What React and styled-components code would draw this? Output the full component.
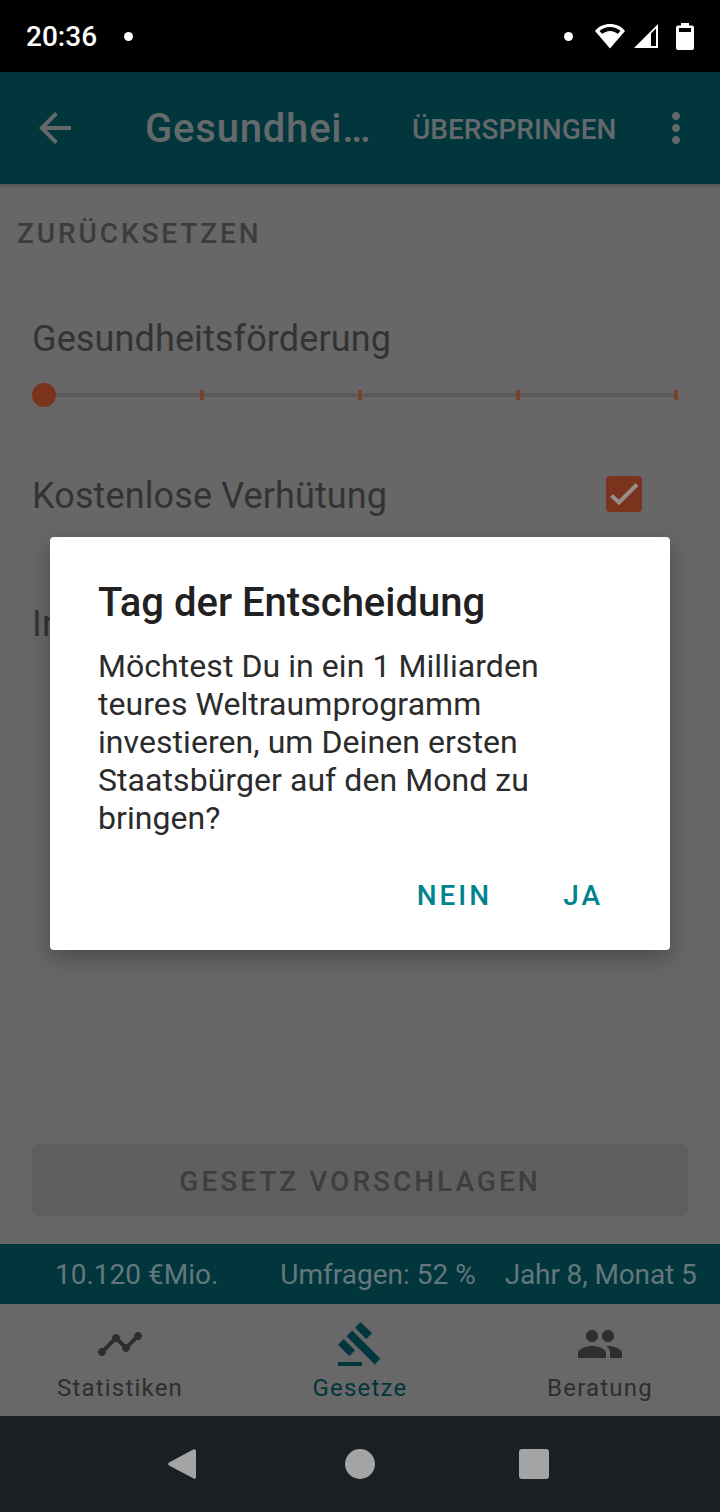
import styled, { createGlobalStyle } from "styled-components";

const GlobalStyle = createGlobalStyle`
  html, body { margin: 0; padding: 0; background: #676767; }
  * { box-sizing: border-box; }
`;

const Screen = styled.div`
  position: relative;
  width: 720px;
  height: 1512px;
  display: flex;
  flex-direction: column;
  overflow: hidden;
  background: #676767;
  font-family: Roboto, "Liberation Sans", sans-serif;
`;

const StatusBar = styled.div`
  height: 72px;
  background: #000;
  color: #fff;
  display: flex;
  align-items: center;
  padding: 0 26px;
`;

const Clock = styled.span`
  font-size: 28px;
  font-weight: 500;
`;

const StatusDot = styled.span`
  width: 9px;
  height: 9px;
  border-radius: 50%;
  background: #fff;
  margin-left: ${(p) => p.$left}px;
`;

const StatusIcons = styled.div`
  margin-left: auto;
  display: flex;
  align-items: center;
  svg:first-of-type {
    margin-left: 22px;
  }
  svg:nth-of-type(2) {
    margin-left: 8px;
  }
  svg:nth-of-type(3) {
    margin-left: 17px;
  }
`;

const Toolbar = styled.header`
  height: 112px;
  background: #02363d;
  color: #646a6c;
  display: flex;
  align-items: center;
  padding-left: 31px;
  box-shadow: 0 2px 3px rgba(0, 0, 0, 0.2);
  z-index: 1;
`;

const Title = styled.h1`
  margin: 0 0 0 66px;
  width: 267px;
  font-size: 40px;
  font-weight: 500;
  letter-spacing: 0.8px;
  white-space: nowrap;
`;

const Skip = styled.span`
  margin-top: 2px;
  font-size: 28px;
  font-weight: 500;
`;

const Kebab = styled.svg`
  margin-left: 36px;
`;

const Content = styled.main`
  flex: 1;
  display: flex;
  flex-direction: column;
  padding: 0 32px 28px;
`;

const Reset = styled.div`
  margin: 33px 0 0 -15px;
  font-size: 28px;
  font-weight: 500;
  line-height: 34px;
  letter-spacing: 2.9px;
  color: #3c3c3c;
`;

const Label = styled.div`
  font-size: 36px;
  line-height: 44px;
  letter-spacing: 0.12px;
  color: #333;
  white-space: nowrap;
`;

const LawTitle = styled(Label)`
  margin-top: 66px;
`;

const Slider = styled.div`
  position: relative;
  height: 24px;
  margin-top: 22px;
  padding-left: 14px;
  display: grid;
  grid-template-columns: repeat(4, 158px);
  align-items: center;
`;

const Track = styled.div`
  position: absolute;
  left: 12px;
  right: 10px;
  top: 10px;
  height: 4px;
  background: #5a5a5a;
`;

const Thumb = styled.div`
  position: absolute;
  left: 0;
  top: 0;
  width: 24px;
  height: 24px;
  border-radius: 50%;
  background: #7a341d;
`;

const Tick = styled.div`
  position: relative;
  justify-self: end;
  width: 4px;
  height: 10px;
  background: #76432f;
`;

const CheckRow = styled.div`
  margin-top: 67px;
  padding-right: 46px;
  display: flex;
  justify-content: space-between;
  align-items: flex-start;
`;

const CheckBox = styled.div`
  width: 36px;
  height: 36px;
  margin-top: 2px;
  border-radius: 4px;
  background: #7a341d;
`;

const HiddenRow = styled(Label)`
  margin-top: 84px;
`;

const ProposeButton = styled.div`
  margin-top: auto;
  height: 72px;
  padding-top: 2px;
  border-radius: 6px;
  background: #5f5f5f;
  color: #3e3e3e;
  font-size: 28px;
  font-weight: 500;
  letter-spacing: 3px;
  display: flex;
  align-items: center;
  justify-content: center;
`;

const StatsBar = styled.div`
  height: 60px;
  background: #02363d;
  color: #64787c;
  font-size: 28px;
  display: flex;
  align-items: center;
`;

const Stat = styled.span`
  margin-left: ${(p) => p.$left}px;
  letter-spacing: ${(p) => p.$spacing || 0}px;
  white-space: nowrap;
`;

const BottomNav = styled.nav`
  height: 112px;
  display: grid;
  grid-template-columns: repeat(3, 1fr);
  background: #686868;
`;

const NavItem = styled.div`
  display: flex;
  flex-direction: column;
  align-items: center;
  padding-top: 16px;
  color: ${(p) => (p.$active ? "#02363d" : "#2e2e2e")};
`;

const NavLabel = styled.span`
  font-size: 24px;
  line-height: 28px;
  letter-spacing: 1.2px;
  margin-top: 6px;
`;

const SystemBar = styled.div`
  height: 96px;
  background: #1c1f21;
  display: flex;
  align-items: center;
  padding-left: 168px;
`;

const HomeButton = styled.div`
  width: 30px;
  height: 30px;
  margin-left: 149px;
  border-radius: 50%;
  background: #a2a4a6;
`;

const RecentButton = styled.div`
  width: 30px;
  height: 30px;
  margin-left: 144px;
  border-radius: 3px;
  background: #a2a4a6;
`;

const Dialog = styled.section`
  position: absolute;
  left: 50px;
  top: 537px;
  width: 620px;
  height: 413px;
  padding: 41px 48px 0;
  border-radius: 4px;
  background: #fff;
  box-shadow: 0 8px 22px rgba(0, 0, 0, 0.28);
`;

const DialogTitle = styled.h2`
  margin: 0;
  font-size: 40px;
  line-height: 50px;
  font-weight: 500;
  color: #212121;
`;

const DialogText = styled.p`
  margin: 19px 0 0;
  font-size: 32px;
  line-height: 38px;
  letter-spacing: 0.06px;
  color: #2b2b2b;
`;

const DialogActions = styled.div`
  display: flex;
  justify-content: flex-end;
  gap: 71px;
  margin: 42px 19px 0 0;
`;

const DialogButton = styled.span`
  font-size: 28px;
  line-height: 34px;
  font-weight: 500;
  letter-spacing: 3px;
  color: #00838f;
`;

const Wifi = () => (
  <svg width="30" height="26" viewBox="0 0 30 26">
    <path d="M15 25.500 0 8C4 3 9 1 15 1s11 2 15 7z" fill="#fff" />
    <path d="M15 19 4.500 8C7.500 5.500 11 4 15 4s7.500 1.500 10.500 4z" fill="#000" />
    <path d="M15 24 6.500 11.500C9 9.500 12 8 15 8s6 1.500 8.500 3.500z" fill="#fff" />
  </svg>
);

const Signal = () => (
  <svg width="26" height="26" viewBox="0 0 26 26">
    <path d="M1 25 25 1v24z" fill="#fff" />
    <path d="M18 10.500 23 5.500V23h-5z" fill="#000" />
  </svg>
);

const Battery = () => (
  <svg width="18" height="27" viewBox="0 0 18 27">
    <path d="M5 0h8v2.500h3a2 2 0 0 1 2 2V25a2 2 0 0 1-2 2H2a2 2 0 0 1-2-2V4.500a2 2 0 0 1 2-2h3z" fill="#fff" />
    <rect x="3" y="5" width="12" height="4" fill="#000" />
  </svg>
);

const MaterialIcon = ({ d, size = 48 }) => (
  <svg width={size} height={size} viewBox="0 0 24 24" fill="currentColor">
    <path d={d} />
  </svg>
);

const icons = {
  back: "M20 11H7.830l5.590-5.590L12 4l-8 8 8 8 1.410-1.410L7.830 13H20v-2z",
  more: "M12 8c1.100 0 2-.9 2-2s-.9-2-2-2-2 .9-2 2 .9 2 2 2zm0 2c-1.100 0-2 .9-2 2s.9 2 2 2 2-.9 2-2-.9-2-2-2zm0 6c-1.100 0-2 .9-2 2s.9 2 2 2 2-.9 2-2-.9-2-2-2z",
  timeline: "M23 8c0 1.100-.9 2-2 2-.18 0-.35-.02-.51-.07l-3.560 3.550c.05.16.07.34.07.52 0 1.100-.9 2-2 2s-2-.9-2-2c0-.18.02-.36.07-.52l-2.550-2.550c-.16.05-.34.07-.52.07s-.36-.02-.52-.07l-4.550 4.560c.05.16.07.33.07.51 0 1.100-.9 2-2 2s-2-.9-2-2 .9-2 2-2c.18 0 .35.02.51.07l4.560-4.550C8.020 9.360 8 9.180 8 9c0-1.100.9-2 2-2s2 .9 2 2c0 .18-.02.36-.07.52l2.550 2.550c.16-.05.34-.07.52-.07s.36.02.52.07l3.550-3.560C19.020 8.350 19 8.180 19 8c0-1.100.9-2 2-2s2 .9 2 2z",
  gavel: "M1 21h12v2H1zM5.245 8.070l2.830-2.827 14.140 14.142-2.828 2.828zM12.317 1l5.657 5.656-2.830 2.830-5.654-5.660zM3.825 9.485l5.657 5.657-2.828 2.828-5.657-5.657z",
  people: "M16 11c1.660 0 2.990-1.340 2.990-3S17.660 5 16 5c-1.660 0-3 1.340-3 3s1.340 3 3 3zm-8 0c1.660 0 2.990-1.340 2.990-3S9.660 5 8 5C6.340 5 5 6.340 5 8s1.340 3 3 3zm0 2c-2.330 0-7 1.170-7 3.500V19h14v-2.500c0-2.330-4.670-3.500-7-3.500zm8 0c-.29 0-.62.02-.97.05 1.160.84 1.970 1.970 1.970 3.450V19h6v-2.500c0-2.330-4.670-3.500-7-3.500z",
};

export default function App() {
  return (
    <Screen>
      <GlobalStyle />
      <StatusBar>
        <Clock>20:36</Clock>
        <StatusDot $left={27} />
        <StatusIcons>
          <StatusDot $left={0} />
          <Wifi />
          <Signal />
          <Battery />
        </StatusIcons>
      </StatusBar>

      <Toolbar>
        <MaterialIcon d={icons.back} />
        <Title>Gesundhei…</Title>
        <Skip>ÜBERSPRINGEN</Skip>
        <Kebab width="48" height="48" viewBox="0 0 24 24" fill="currentColor">
          <path d={icons.more} />
        </Kebab>
      </Toolbar>

      <Content>
        <Reset>ZURÜCKSETZEN</Reset>
        <LawTitle>Gesundheitsförderung</LawTitle>
        <Slider>
          <Track />
          <Thumb />
          <Tick />
          <Tick />
          <Tick />
          <Tick />
        </Slider>
        <CheckRow>
          <Label>Kostenlose Verhütung</Label>
          <CheckBox>
            <svg width="36" height="36" viewBox="0 0 36 36" fill="none" stroke="#978e8a" strokeWidth="4">
              <path d="M5.500 19.500 13 26.500 31 8.500" />
            </svg>
          </CheckBox>
        </CheckRow>
        <HiddenRow>In</HiddenRow>
        <ProposeButton>GESETZ VORSCHLAGEN</ProposeButton>
      </Content>

      <StatsBar>
        <Stat $left={55}>10.120 €Mio.</Stat>
        <Stat $left={62}>Umfragen: 52 %</Stat>
        <Stat $left={29} $spacing={-0.12}>Jahr 8, Monat 5</Stat>
      </StatsBar>

      <BottomNav>
        <NavItem>
          <MaterialIcon d={icons.timeline} />
          <NavLabel>Statistiken</NavLabel>
        </NavItem>
        <NavItem $active>
          <MaterialIcon d={icons.gavel} />
          <NavLabel>Gesetze</NavLabel>
        </NavItem>
        <NavItem>
          <MaterialIcon d={icons.people} />
          <NavLabel>Beratung</NavLabel>
        </NavItem>
      </BottomNav>

      <SystemBar>
        <svg width="28" height="32" viewBox="0 0 28 32">
          <path d="M27 1.500a1.500 1.500 0 0 1 1 1.300v26.400a1.500 1.500 0 0 1-2.300 1.300L1 17.500a1.800 1.800 0 0 1 0-3L25.700 1.200z" fill="#a2a4a6" />
        </svg>
        <HomeButton />
        <RecentButton />
      </SystemBar>

      <Dialog>
        <DialogTitle>Tag der Entscheidung</DialogTitle>
        <DialogText>
          Möchtest Du in ein 1 Milliarden teures Weltraumprogramm investieren, um Deinen ersten Staatsbürger auf den
          Mond zu bringen?
        </DialogText>
        <DialogActions>
          <DialogButton>NEIN</DialogButton>
          <DialogButton>JA</DialogButton>
        </DialogActions>
      </Dialog>
    </Screen>
  );
}
